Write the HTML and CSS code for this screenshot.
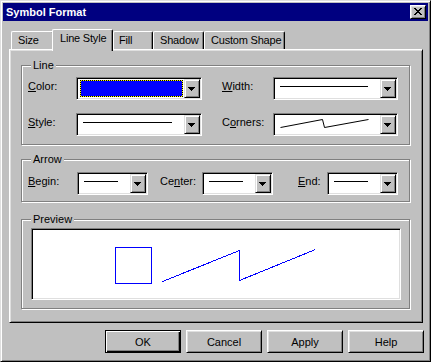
FILE: index.html
```html
<!DOCTYPE html>
<html>
<head>
    <title>Symbol Format</title>
    <meta charset="utf-8">
    <link rel="stylesheet" href="styles.css">
</head>
<body>
    <div class="window">
        <div class="titlebar">
            <span class="title">Symbol Format</span>
            <div class="close-btn">
                <svg width="8" height="7" viewBox="0 0 8 7"><path d="M0 0h2v1H0zM6 0h2v1H6zM1 1h2v1H1zM5 1h2v1H5zM2 2h4v1H2zM3 3h2v1H3zM2 4h4v1H2zM1 5h2v1H1zM5 5h2v1H5zM0 6h2v1H0zM6 6h2v1H6z"/></svg>
            </div>
        </div>

        <div class="content">
            <div class="tabs">
                <div class="tab tab-size">Size</div>
                <div class="tab tab-active tab-line">Line Style</div>
                <div class="tab tab-fill">Fill</div>
                <div class="tab tab-shadow">Shadow</div>
                <div class="tab tab-custom">Custom Shape</div>
            </div>

            <div class="panel">
                <!-- Line -->
                <div class="group group-line">
                    <span class="legend">Line</span>
                    <div class="line-grid">
                        <label class="field-label"><u>C</u>olor:</label>
                        <div class="combo">
                            <div class="combo-value"><div class="swatch"></div></div>
                            <div class="drop-btn"><svg width="7" height="4" viewBox="0 0 7 4"><path d="M0 0h7v1H0zM1 1h5v1H1zM2 2h3v1H2zM3 3h1v1H3z"/></svg></div>
                        </div>
                        <label class="field-label col-right"><u>W</u>idth:</label>
                        <div class="combo">
                            <div class="combo-value"><div class="line-sample"></div></div>
                            <div class="drop-btn"><svg width="7" height="4" viewBox="0 0 7 4"><path d="M0 0h7v1H0zM1 1h5v1H1zM2 2h3v1H2zM3 3h1v1H3z"/></svg></div>
                        </div>

                        <label class="field-label"><u>S</u>tyle:</label>
                        <div class="combo">
                            <div class="combo-value"><div class="line-sample"></div></div>
                            <div class="drop-btn"><svg width="7" height="4" viewBox="0 0 7 4"><path d="M0 0h7v1H0zM1 1h5v1H1zM2 2h3v1H2zM3 3h1v1H3z"/></svg></div>
                        </div>
                        <label class="field-label col-right">C<u>o</u>rners:</label>
                        <div class="combo">
                            <div class="combo-value">
                                <svg class="corner-sample" width="100" height="19" viewBox="0 0 100 19"><polyline points="5.5,12.5 47.5,4.5 49.5,12.5 93.5,4.5" fill="none" stroke="#000" stroke-width="1"/></svg>
                            </div>
                            <div class="drop-btn"><svg width="7" height="4" viewBox="0 0 7 4"><path d="M0 0h7v1H0zM1 1h5v1H1zM2 2h3v1H2zM3 3h1v1H3z"/></svg></div>
                        </div>
                    </div>
                </div>

                <!-- Arrow -->
                <div class="group group-arrow">
                    <span class="legend">Arrow</span>
                    <div class="arrow-row">
                        <label class="field-label label-begin"><u>B</u>egin:</label>
                        <div class="combo combo-small">
                            <div class="combo-value"><div class="line-sample"></div></div>
                            <div class="drop-btn"><svg width="7" height="4" viewBox="0 0 7 4"><path d="M0 0h7v1H0zM1 1h5v1H1zM2 2h3v1H2zM3 3h1v1H3z"/></svg></div>
                        </div>
                        <label class="field-label label-center">Ce<u>n</u>ter:</label>
                        <div class="combo combo-small">
                            <div class="combo-value"><div class="line-sample"></div></div>
                            <div class="drop-btn"><svg width="7" height="4" viewBox="0 0 7 4"><path d="M0 0h7v1H0zM1 1h5v1H1zM2 2h3v1H2zM3 3h1v1H3z"/></svg></div>
                        </div>
                        <label class="field-label label-end"><u>E</u>nd:</label>
                        <div class="combo combo-small">
                            <div class="combo-value"><div class="line-sample"></div></div>
                            <div class="drop-btn"><svg width="7" height="4" viewBox="0 0 7 4"><path d="M0 0h7v1H0zM1 1h5v1H1zM2 2h3v1H2zM3 3h1v1H3z"/></svg></div>
                        </div>
                    </div>
                </div>

                <!-- Preview -->
                <div class="group group-preview">
                    <span class="legend">Preview</span>
                    <div class="preview-box">
                        <svg width="366" height="68" viewBox="0 0 366 68">
                            <rect x="82.5" y="17.5" width="36" height="36" fill="none" stroke="#0000ff" stroke-width="1"/>
                            <polyline points="129.5,51.5 206.5,20.5 206.5,50.5 282.5,19.5" fill="none" stroke="#0000ff" stroke-width="1"/>
                        </svg>
                    </div>
                </div>
            </div>

            <div class="buttons">
                <button class="btn btn-default">OK</button>
                <button class="btn">Cancel</button>
                <button class="btn">Apply</button>
                <button class="btn">Help</button>
            </div>
        </div>
    </div>
</body>
</html>
```

FILE: styles.css
```css
* {
    box-sizing: border-box;
}
body {
    margin: 0;
    font-family: "Liberation Sans", Arial, sans-serif;
    font-size: 11px;
    color: #000;
    background-color: #c0c0c0;
}
.window {
    width: 431px;
    height: 362px;
    padding: 2px;
    background-color: #c0c0c0;
    border: 1px solid;
    border-color: #dfdfdf #000 #000 #dfdfdf;
    box-shadow: inset 1px 1px #fff, inset -1px -1px #808080;
}
.titlebar {
    height: 18px;
    display: flex;
    align-items: center;
    padding: 0 2px 0 3px;
    background-color: #000080;
    color: #fff;
}
.title {
    font-weight: bold;
    line-height: 13px;
}
.close-btn {
    margin-left: auto;
    width: 16px;
    height: 14px;
    padding: 2px 0 0 3px;
    background-color: #c0c0c0;
    border: 1px solid;
    border-color: #fff #000 #000 #fff;
    box-shadow: inset 1px 1px #dfdfdf, inset -1px -1px #808080;
}
.close-btn svg {
    display: block;
}
.content {
    padding: 8px 4px 0 6px;
}

/* tabs */
.tabs {
    display: flex;
    align-items: flex-end;
    height: 20px;
    padding-left: 2px;
}
.tab {
    height: 18px;
    padding-left: 6px;
    line-height: 17px;
    white-space: nowrap;
    letter-spacing: -0.2px;
    background-color: #c0c0c0;
    border-top: 1px solid #fff;
    border-left: 1px solid #fff;
    border-right: 1px solid #000;
    border-radius: 2px 2px 0 0;
    box-shadow: inset -1px 0 #808080;
}
.tab-active {
    position: relative;
    z-index: 1;
    height: 22px;
    margin: 0 0 -2px -2px;
    padding-left: 7px;
}
.tab-size { width: 43px; }
.tab-line { width: 61px; }
.tab-fill { width: 40px; padding-left: 5px; }
.tab-shadow { width: 51px; }
.tab-custom { width: 81px; }

.panel {
    width: 414px;
    height: 274px;
    padding: 15px 0 0 11px;
    border: 1px solid;
    border-color: #fff #000 #000 #fff;
    box-shadow: inset 1px 1px #dfdfdf, inset -1px -1px #808080;
}

/* group boxes */
.group {
    position: relative;
    width: 389px;
    border: 1px solid #808080;
    box-shadow: inset 1px 1px #fff, 1px 1px #fff;
}
.legend {
    position: absolute;
    top: -7px;
    left: 9px;
    padding: 0 2px;
    line-height: 13px;
    background-color: #c0c0c0;
}
.group-line {
    height: 80px;
    padding: 11px 0 0 6px;
}
.group-arrow {
    height: 43px;
    margin-top: 14px;
    padding: 12px 0 0 6px;
}
.group-preview {
    height: 90px;
    margin-top: 17px;
    padding: 8px 0 0 9px;
}
.field-label {
    line-height: 13px;
    margin-bottom: 4px;
    white-space: nowrap;
}
.line-grid {
    display: grid;
    grid-template-columns: 48px 126px 20px 51px 125px;
    grid-template-rows: 23px 23px;
    row-gap: 13px;
    align-items: center;
}
.col-right {
    grid-column: 4;
}
.arrow-row {
    display: flex;
    align-items: center;
    height: 23px;
}
.label-begin { width: 49px; }
.label-center { width: 42px; margin-left: 12px; }
.label-end { width: 29px; margin-left: 25px; }

/* combo boxes */
.combo {
    display: flex;
    height: 23px;
    padding: 1px;
    background-color: #fff;
    border: 1px solid;
    border-color: #808080 #fff #fff #808080;
    box-shadow: inset 1px 1px #000, inset -1px -1px #dfdfdf;
}
.combo-small {
    width: 71px;
}
.combo-value {
    flex: 1;
    display: flex;
    align-items: flex-start;
}
.swatch {
    flex: 1;
    height: 17px;
    margin: 1px 1px 0 2px;
    border: 1px dotted #000;
    background-color: #ff0;
    box-shadow: inset 0 0 0 40px #0000ff;
}
.line-sample {
    flex: 1;
    height: 1px;
    margin: 7px 12px 0 5px;
    background-color: #000;
}
.corner-sample {
    display: block;
}
.drop-btn {
    width: 16px;
    padding: 7px 0 0 3px;
    background-color: #c0c0c0;
    border: 1px solid;
    border-color: #dfdfdf #000 #000 #dfdfdf;
    box-shadow: inset 1px 1px #fff, inset -1px -1px #808080;
}
.drop-btn svg {
    display: block;
}

/* preview */
.preview-box {
    width: 370px;
    height: 72px;
    padding: 1px;
    background-color: #fff;
    border: 1px solid;
    border-color: #808080 #fff #fff #808080;
    box-shadow: inset 1px 1px #000, inset -1px -1px #dfdfdf;
}
.preview-box svg {
    display: block;
    shape-rendering: crispEdges;
}

/* dialog buttons */
.buttons {
    display: flex;
    justify-content: flex-end;
    gap: 5px;
    margin-top: 7px;
}
.btn {
    width: 76px;
    height: 23px;
    padding: 0;
    font: inherit;
    color: #000;
    background-color: #c0c0c0;
    border: 1px solid;
    border-color: #fff #000 #000 #fff;
    box-shadow: inset 1px 1px #dfdfdf, inset -1px -1px #808080;
}
.btn-default {
    border-color: #000;
    box-shadow: inset 1px 1px #fff, inset -1px -1px #000, inset -2px -2px #808080;
}
```
